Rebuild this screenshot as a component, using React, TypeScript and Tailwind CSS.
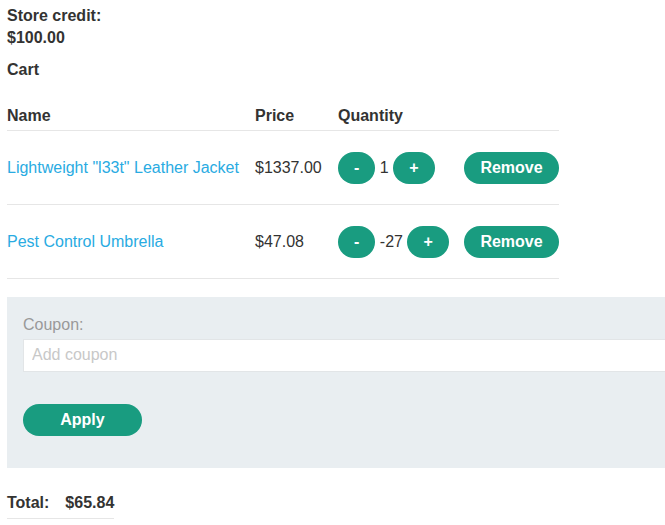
import * as React from "react";

interface CartItem {
  id: number;
  name: string;
  price: string;
  quantity: number;
}

const items: CartItem[] = [
  { id: 1, name: 'Lightweight "l33t" Leather Jacket', price: "$1337.00", quantity: 1 },
  { id: 2, name: "Pest Control Umbrella", price: "$47.08", quantity: -27 },
];

const pill =
  "h-8 rounded-full bg-[#199c80] px-4 font-bold text-white leading-none";

const App: React.FC = () => {
  return (
    <div className="w-full overflow-hidden bg-white">
      <div className="pl-[7px] pt-[5px] font-['Liberation_Sans',Arial,sans-serif] text-base leading-[22.4px] text-[#333332]">
        <p className="font-bold">
          Store credit:
          <br />
          $100.00
        </p>
        <p className="mt-[9px] font-bold">Cart</p>

        <div className="mt-[19px] w-[552px]">
          <div className="grid h-[31px] grid-cols-[248px_83px_126px_95px] items-end border-b border-[#e6e6e6] pb-[3px] font-bold">
            <span>Name</span>
            <span>Price</span>
            <span>Quantity</span>
            <span />
          </div>
          {items.map((item) => (
            <div
              key={item.id}
              className="grid h-[74px] grid-cols-[248px_83px_126px_95px] items-center border-b border-[#e6e6e6]"
            >
              <a href="#" className="text-[#29abe2]">
                {item.name}
              </a>
              <span>{item.price}</span>
              <div className="flex items-center gap-[4.5px]">
                <button className={pill}>-</button>
                <span>{item.quantity}</span>
                <button className={pill}>+</button>
              </div>
              <button className={pill}>Remove</button>
            </div>
          ))}
        </div>

        <div className="mt-[18px] w-[720px] bg-[#e9eef1] px-4 pb-8 pt-[17px]">
          <label className="block text-[#999999]">Coupon:</label>
          <input
            type="text"
            placeholder="Add coupon"
            className="mt-[2px] block h-[33px] w-full border border-[#e2e5e7] bg-white px-2 text-[#333332] outline-none placeholder:text-[#c8c8c8]"
          />
          <button className={`${pill} mt-8 w-[119px]`}>Apply</button>
        </div>

        <div className="mt-6 flex w-fit gap-[16px] border-b border-[#e6e6e6] pb-1 font-bold">
          <span>Total:</span>
          <span>$65.84</span>
        </div>
      </div>
    </div>
  );
};

export default App;
